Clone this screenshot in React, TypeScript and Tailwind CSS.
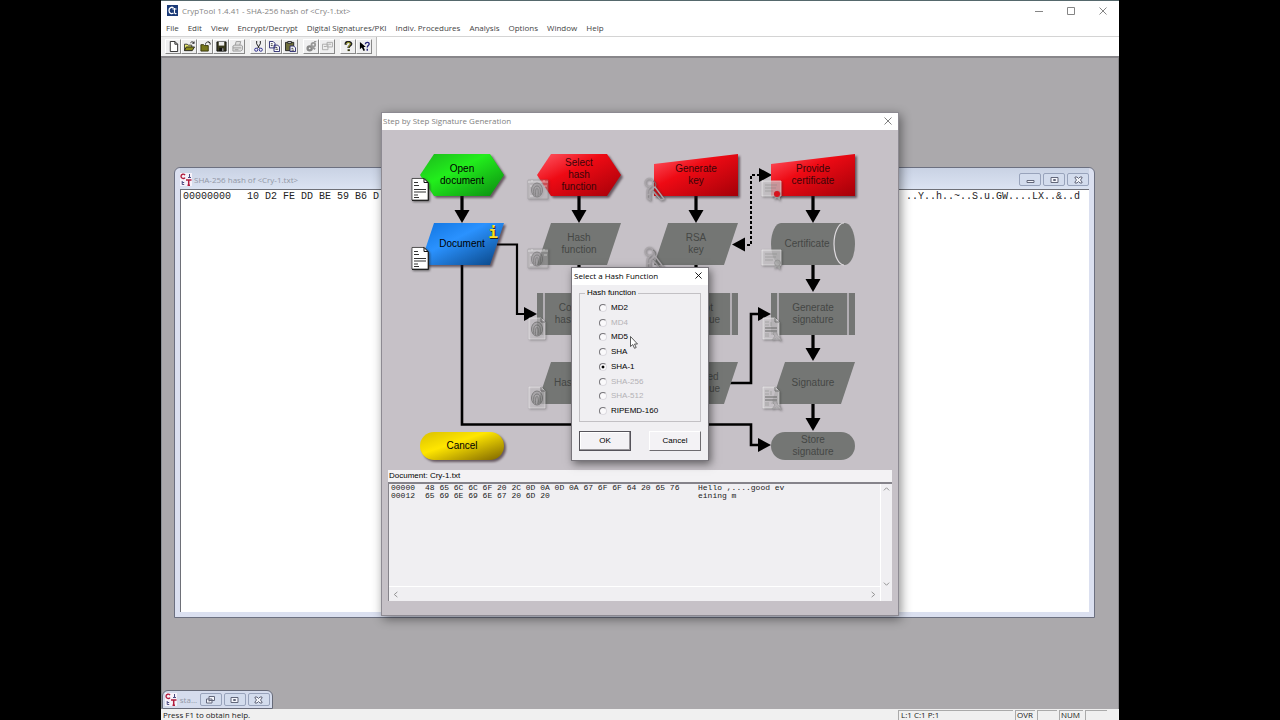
import { useState } from "react";
import type { ReactNode } from "react";

type Shape = "hexagon" | "parallelogram" | "input" | "process" | "cylinder" | "pill";
type Tone = "green" | "red" | "blue" | "yellow" | "gray";
type Badge = "document" | "print" | "printPage" | "key" | "certificate" | "signature";

interface FlowNode {
  id: string;
  label: string;
  col: number;
  row: number;
  shape: Shape;
  tone: Tone;
  badge?: Badge;
  info?: boolean;
}

const COL_X = [38, 155, 272, 389];
const ROW_Y = [24, 93, 163, 232, 302];

const NODES: FlowNode[] = [
  { id: "open", label: "Open\ndocument", col: 0, row: 0, shape: "hexagon", tone: "green", badge: "document" },
  { id: "document", label: "Document", col: 0, row: 1, shape: "parallelogram", tone: "blue", badge: "document", info: true },
  { id: "cancel", label: "Cancel", col: 0, row: 4, shape: "pill", tone: "yellow" },
  { id: "select-hash", label: "Select\nhash\nfunction", col: 1, row: 0, shape: "hexagon", tone: "red", badge: "print" },
  { id: "hash-fn", label: "Hash\nfunction", col: 1, row: 1, shape: "parallelogram", tone: "gray", badge: "print" },
  { id: "compute", label: "Compute\nhash value", col: 1, row: 2, shape: "process", tone: "gray", badge: "printPage" },
  { id: "hash-value", label: "Hash value", col: 1, row: 3, shape: "parallelogram", tone: "gray", badge: "printPage" },
  { id: "gen-key", label: "Generate\nkey", col: 2, row: 0, shape: "input", tone: "red", badge: "key" },
  { id: "rsa-key", label: "RSA\nkey", col: 2, row: 1, shape: "parallelogram", tone: "gray", badge: "key" },
  { id: "encrypt", label: "Encrypt\nhash value", col: 2, row: 2, shape: "process", tone: "gray" },
  { id: "encrypted", label: "Encrypted\nhash value", col: 2, row: 3, shape: "parallelogram", tone: "gray" },
  { id: "provide-cert", label: "Provide\ncertificate", col: 3, row: 0, shape: "input", tone: "red", badge: "certificate" },
  { id: "certificate", label: "Certificate", col: 3, row: 1, shape: "cylinder", tone: "gray", badge: "certificate" },
  { id: "gen-sig", label: "Generate\nsignature", col: 3, row: 2, shape: "process", tone: "gray", badge: "signature" },
  { id: "signature", label: "Signature", col: 3, row: 3, shape: "parallelogram", tone: "gray", badge: "signature" },
  { id: "store", label: "Store\nsignature", col: 3, row: 4, shape: "pill", tone: "gray" },
];

const TONES: Record<Tone, string[]> = {
  green: ["#1cb81c", "#22ee1c", "#0a8a10"],
  red: ["#ff5a66", "#ee0a14", "#a40008"],
  blue: ["#0f72dd", "#2a92ff", "#08427f"],
  yellow: ["#d9c000", "#ffe600", "#7d6400"],
  gray: ["#747674", "#747674", "#747674"],
};

const HASHES = [
  { name: "MD2" },
  { name: "MD4", off: true },
  { name: "MD5" },
  { name: "SHA" },
  { name: "SHA-1" },
  { name: "SHA-256", off: true },
  { name: "SHA-512", off: true },
  { name: "RIPEMD-160" },
];

const MENUS = [
  "File", "Edit", "View", "Encrypt/Decrypt", "Digital Signatures/PKI",
  "Indiv. Procedures", "Analysis", "Options", "Window", "Help",
];

const DUMP = [
  { offset: "00000", hex: "48 65 6C 6C 6F 20 2C 0D 0A 0D 0A 67 6F 6F 64 20 65 76", ascii: "Hello ,....good ev" },
  { offset: "00012", hex: "65 69 6E 69 6E 67 20 6D 20", ascii: "eining m" },
];

const TOOLS: { name: string; icon: ReactNode }[][] = [
  [
    { name: "New", icon: <path d="M2.5 .5h5l3 3v8h-8zM7.5 .5v3h3" fill="#fff" stroke="#222" /> },
    {
      name: "Open",
      icon: (
        <>
          <path d="M.5 10.500v-7h3l1 1h4v2" fill="#e8e86a" stroke="#333" />
          <path d="M.5 10.500l2-4h9l-2.500 4z" fill="#8a8a1c" stroke="#222" />
          <path d="M7 2c1-1.500 3-1.500 4 .5M11 .5v2h-2" fill="none" stroke="#222" />
        </>
      ),
    },
    {
      name: "Close",
      icon: (
        <>
          <path d="M1 11V4h3l1 1h4v6z" fill="#77771c" stroke="#33330a" />
          <path d="M6 4c0-3 3-4 5-2M9 1l2 1v2" fill="none" stroke="#222" />
        </>
      ),
    },
    {
      name: "Save",
      icon: (
        <>
          <path d="M1 1h10v10H1z" fill="#39391c" stroke="#111" />
          <path d="M3 1h6v4H3z" fill="#eee" />
          <path d="M3.500 7.500h5V11h-5z" fill="#111" />
          <path d="M7 8h1v3H7z" fill="#ddd" />
        </>
      ),
    },
    {
      name: "Print",
      icon: (
        <>
          <path d="M3.500 4.500l1-4h5l-1 4M1 5.500l2-1h7l1.500 1v4l-2 1.500H1z" fill="#ddd" stroke="#999" />
          <path d="M1 7.500h9M3 9.500h4" stroke="#999" />
        </>
      ),
    },
  ],
  [
    {
      name: "Cut",
      icon: (
        <>
          <path d="M4 0v3l3 5M8 0v3L5 8" fill="none" stroke="#111" />
          <circle cx="3.500" cy="9.500" r="1.700" fill="none" stroke="#23238a" />
          <circle cx="8.500" cy="9.500" r="1.700" fill="none" stroke="#23238a" />
        </>
      ),
    },
    {
      name: "Copy",
      icon: (
        <>
          <path d="M.5 .5h4l2 2v5h-6zM5.500 4.500h4l2 2v5h-6z" fill="#fff" stroke="#22226a" />
          <path d="M2 3h2M2 5h2M7 7h2M7 9h3" stroke="#333" />
        </>
      ),
    },
    {
      name: "Paste",
      icon: (
        <>
          <path d="M.5 1.500h9v9h-9z" fill="#6d6d3a" stroke="#222" />
          <path d="M3 .5h4v2H3z" fill="#ddd" stroke="#222" />
          <path d="M5.500 5.500h4l2 2v4h-6z" fill="#fff" stroke="#22226a" />
          <path d="M7 8h2M7 10h3" stroke="#333" />
        </>
      ),
    },
  ],
  [
    {
      name: "Show key",
      icon: (
        <>
          <circle cx="4" cy="8" r="2.500" fill="#888" stroke="#888" strokeWidth="2" />
          <circle cx="8" cy="4" r="2" fill="none" stroke="#999" strokeWidth="2" />
          <path d="M9 1l2-1M6 6l4 3" stroke="#999" strokeWidth="2" />
          <circle cx="4" cy="8" r="1" fill="#eee" />
        </>
      ),
    },
    {
      name: "Paste key",
      icon: (
        <path d="M.5 3.500h6v6h-6zM5.500 1.500h6v5h-6zM2 6h3M7 3.500h3" fill="#eee" stroke="#aaa" />
      ),
    },
  ],
  [
    {
      name: "Help",
      icon: (
        <>
          <path d="M3 4V2.500C3.500 .5 8.500 .5 9 3c0 2-3 2-3 4.500" fill="none" stroke="#222" strokeWidth="2.500" />
          <path d="M3.500 3.500c.5-2.500 4.500-2 4.500-.5 0 1.500-2 2-2 4" fill="none" stroke="#c4c42c" />
          <path d="M5 9h2.500v2H5z" fill="#33330a" />
        </>
      ),
    },
    {
      name: "Context help",
      icon: (
        <>
          <path d="M1 1v8l2-2 2 4 1.500-1L5 6.500h2.500z" fill="#000" />
          <path d="M7 3.500C7 .5 11.500 1 11 3.500c-.5 1.500-2 1.500-2 3.500M9 8.500v2" fill="none" stroke="#23237a" strokeWidth="1.500" />
        </>
      ),
    },
  ],
];

function AppIcon() {
  return (
    <svg viewBox="0 0 11 11" className="size-[11px]">
      <path d="M0 0h11v11H0z" fill="#1b3b78" />
      <path d="M6.500 3C5 1.500 2 2.500 2 5.500S5 9.200 6.500 8" fill="none" stroke="#fff" strokeWidth="1.300" />
      <path d="M5.500 4h4M7.500 3v4.500c0 1 1 1.300 2 1" fill="none" stroke="#fff" strokeWidth="1.100" />
    </svg>
  );
}

function ChildIcon() {
  return (
    <svg viewBox="0 0 12 13" className="h-[13px] w-3 shrink-0">
      <path d="M0 0h12v13H0z" fill="#f6f2fa" />
      <path d="M5 2.200C4 .6 1 .8 1 3.300S4 6 5 4.600" fill="none" stroke="#b01c3c" strokeWidth="1.400" />
      <path d="M6 7h5.500M8.700 7v5M7.500 12.300h2.500" fill="none" stroke="#b01c3c" strokeWidth="1.500" />
      <path d="M9.500 1v3.500M8 4.500h3M2.200 8v3.500h2M2.200 9.500h2" fill="none" stroke="#4a4a80" />
    </svg>
  );
}

function CloseGlyph({ className }: { className: string }) {
  return (
    <svg viewBox="0 0 8 8" className={className} fill="none" stroke="currentColor">
      <path d="M.5 .5l7 7M7.500 .5l-7 7" />
    </svg>
  );
}

function FrameButton({ label, kind }: { label: string; kind: "min" | "max" | "restore" | "close" }) {
  return (
    <button
      aria-label={label}
      className="flex h-[13px] w-[22px] items-center justify-center rounded-xs border border-[#98a3bb] bg-[#d3dced]"
    >
      <svg viewBox="0 0 9 8" className="h-2 w-[9px]" fill="#f4f6fb" stroke="#62677a">
        {kind === "min" && <path d="M1 4.500h7v2H1z" />}
        {kind === "max" && <path d="M1 1.500h7v5H1zM3.500 3.500h2v1h-2z" />}
        {kind === "restore" && <path d="M3 .5h5.500v4H3zM.5 3h5.500v4H.5zM2.500 4.800h1.500" />}
        {kind === "close" && <path d="M1 1h2l1.500 1.500L6 1h2v1L6.500 4 8 6v1H6L4.500 5.500 3 7H1V6l1.500-2L1 2z" />}
      </svg>
    </button>
  );
}

function NodeShape({ node }: { node: FlowNode }) {
  const height = node.shape === "pill" ? 28 : 42;
  const fill = `url(#fill-${node.id})`;
  const [a, b, c] = TONES[node.tone];
  return (
    <svg
      viewBox={`0 0 84 ${height}`}
      className={
        node.tone === "gray"
          ? "absolute inset-0 size-full overflow-visible"
          : "absolute inset-0 size-full overflow-visible drop-shadow-[2px_2px_1px_rgba(40,20,30,0.6)]"
      }
    >
      <defs>
        <linearGradient id={`fill-${node.id}`} x1="0" y1="0" x2="1" y2="1">
          <stop offset="0" stopColor={a} />
          <stop offset="0.4" stopColor={b} />
          <stop offset="1" stopColor={c} />
        </linearGradient>
      </defs>
      {node.shape === "hexagon" && <path d="M14 0h56l14 21-14 21H14L0 21z" fill={fill} />}
      {node.shape === "parallelogram" && <path d="M14 0h70L70 42H0z" fill={fill} />}
      {node.shape === "input" && <path d="M0 10L84 0v42H0z" fill={fill} />}
      {node.shape === "pill" && <rect width="84" height="28" rx="14" fill={fill} />}
      {node.shape === "process" && (
        <>
          <path d="M0 0h84v42H0z" fill={fill} />
          <path d="M7 0v42M77 0v42" stroke="#c6c1c7" strokeWidth="1.500" />
        </>
      )}
      {node.shape === "cylinder" && (
        <>
          <path d="M10 0h64a10 21 0 0 1 0 42H10A10 21 0 0 1 10 0z" fill={fill} />
          <path d="M73 0a10 21 0 0 0 0 42" fill="none" stroke="#dedade" strokeWidth="1.200" />
        </>
      )}
    </svg>
  );
}

function BadgeIcon({ badge }: { badge: Badge }) {
  const whorl = (
    <g fill="none" stroke="#777" strokeWidth="1">
      <ellipse cx="10" cy="12" rx="5.500" ry="7" fill="#999" fillOpacity="0.5" />
      <path d="M7 17c-1-5 0-9 3-9s4 3 3 9M8.700 18c-.5-5 0-7.500 1.300-7.500s1.500 3 1 7.500" />
    </g>
  );
  return (
    <svg
      viewBox="0 0 22 24"
      className="absolute top-6 -left-2.5 h-6 w-[22px] overflow-visible drop-shadow-[1px_1px_1px_rgba(40,40,40,0.6)]"
    >
      {badge === "document" && (
        <>
          <path d="M2 .5h12l4 4V22H2z" fill="#fff" stroke="#222" strokeWidth="0.700" />
          <path d="M14 .5v4h4z" fill="#fff" stroke="#111" />
          <path d="M4 4.500h4M4 7.500h5M4 17h4M4 19.500h5" stroke="#333" strokeWidth="1.200" />
          <path d="M4 11.500h12M4 14h12" stroke="#333" strokeWidth="1.200" />
          <path d="M2 22.500h16.500V5" fill="none" stroke="#222" />
        </>
      )}
      {badge === "print" && (
        <g opacity="0.6">
          <path d="M1 2h20v19H1z" fill="#e8e4e8" fillOpacity="0.5" stroke="#888" strokeWidth="0.600" />
          <path d="M1 4h20M5 2v2M17 2v2M3 8h3M3 18h3M17 8h3" stroke="#fff" />
          {whorl}
        </g>
      )}
      {badge === "printPage" && (
        <g opacity="0.75">
          <path d="M2 1h12l4 4v17H2z" fill="#e8e4e8" fillOpacity="0.65" stroke="#f4f4f4" strokeWidth="0.700" />
          <path d="M14 1v4h4" fill="none" stroke="#666" />
          {whorl}
        </g>
      )}
      {badge === "key" && (
        <g fill="none" stroke="#aaa6aa" strokeWidth="1.400">
          <circle cx="5" cy="4.500" r="4" />
          <path d="M9 3c3 1 4 5 1 7" stroke="#777" strokeWidth="1" />
          <path d="M7 8l-4 4v8l3 2v-9l5-4 9 12-3 1-8-9M3 17l3-1" />
          <path d="M9 12l8 9" stroke="#777" strokeWidth="0.800" />
        </g>
      )}
      {badge === "certificate" && (
        <g opacity="0.8">
          <path d="M1 3h19v15H1z" fill="#e2dfe2" fillOpacity="0.8" stroke="#f4f4f4" strokeWidth="0.800" />
          <path d="M4 7h12M4 10h11M4 13h8" stroke="#aaa" />
          <path d="M14 17l-1 5 3-2 3 3v-6" fill="#aaa" />
          <circle cx="16.500" cy="16" r="3" fill="#bbb" stroke="#888" strokeWidth="0.500" />
        </g>
      )}
      {badge === "signature" && (
        <g opacity="0.85">
          <path d="M2 1h12l4 4v17H2z" fill="#e2dfe2" fillOpacity="0.8" stroke="#f4f4f4" strokeWidth="0.700" />
          <path d="M14 1v4h4" fill="none" stroke="#777" />
          <path d="M4 5h4M4 8h4M4 17h4M4 19h4M10 5v4" stroke="#aaa" />
          <path d="M4 11h12M4 14h12" stroke="#888" strokeWidth="1.400" />
          <path d="M12 17a2 2 0 1 1 4 0c0 2 4 3 4 7l-4-3-5 2 3-4z" fill="#c0bcc0" stroke="#999" strokeWidth="0.600" />
        </g>
      )}
    </svg>
  );
}

function FlowButton({ node }: { node: FlowNode }) {
  const disabled = node.tone === "gray";
  return (
    <button
      disabled={disabled}
      className={`absolute flex w-[84px] items-center justify-center ${node.shape === "pill" ? "h-7" : "h-[42px]"} ${node.shape === "cylinder" ? "pr-3" : ""}`}
      style={{ left: COL_X[node.col], top: ROW_Y[node.row] }}
    >
      <NodeShape node={node} />
      {node.id === "provide-cert" ? <SealedBadge /> : node.badge && <BadgeIcon badge={node.badge} />}
      <span
        className={`relative text-center text-[10px]/3 whitespace-pre ${disabled ? "text-[#454745]" : node.tone === "red" ? "text-[#3a0508]" : "text-black"}`}
      >
        {node.label}
      </span>
      {node.info && (
        <span className="absolute top-0.5 right-1.5 font-['DejaVu_Sans_Mono',monospace] text-base/4 font-bold text-yellow-300 [text-shadow:1px_1px_0_#222]">
          i
        </span>
      )}
    </button>
  );
}

function SealedBadge() {
  return (
    <>
      <BadgeIcon badge="certificate" />
      <span className="absolute top-[37px] left-[3px] size-1.5 rounded-full bg-[#d8121c]" />
    </>
  );
}

function Connectors() {
  return (
    <svg viewBox="1 0 516 340" className="absolute top-0 left-0 h-[340px] w-[516px]">
      <g fill="none" stroke="#000" strokeWidth="2.600">
        <path d="M81 66v18M198 66v18M315 66v18M432 66v18" strokeWidth="3.200" />
        <path d="M198 135v18M315 135v18M432 135v18M198 205v18M315 205v18M432 205v18M432 274v18" strokeWidth="3.200" />
        <path d="M81 135v159.500h289v20.500h10" />
        <path d="M116 114.500h20V184h10" strokeWidth="2.200" />
        <path d="M349 253h21v-69H380" />
        <path d="M379 45h-9v70h-9" strokeWidth="2" strokeDasharray="3 2" />
      </g>
      {[
        [81, 93], [198, 93], [315, 93], [432, 93],
        [198, 162], [315, 162], [432, 162],
        [198, 231], [315, 231], [432, 231], [432, 301],
      ].map(([x, y]) => (
        <path key={`${x}-${y}`} d={`M${x - 7.5} ${y - 13}h15l-7.500 13z`} />
      ))}
      {[[156, 184], [390, 184], [390, 315], [391, 45]].map(([x, y]) => (
        <path key={`${x}-${y}`} d={`M${x - 13} ${y - 7}v14l13-7z`} />
      ))}
      <path d="M351 114.500l13-7v14z" />
    </svg>
  );
}

function HashDialog() {
  const [hash, setHash] = useState("SHA-1");
  return (
    <div
      role="dialog"
      aria-label="Select a Hash Function"
      className="relative flex w-[138px] flex-col border border-[#77747a] bg-[#f0eff2] pb-[9px] text-[8px]/3 text-black shadow-[2px_3px_8px_rgba(0,0,0,0.5)]"
    >
      <div className="flex h-[17px] items-center justify-between bg-white pr-1.5 pb-0.5 pl-0.5">
        <h2 className="font-['Open_Sans',sans-serif] whitespace-nowrap">Select a Hash Function</h2>
        <button aria-label="Close">
          <CloseGlyph className="size-[7px]" />
        </button>
      </div>
      <fieldset className="mx-[7px] mt-0.5 border border-[#c2c0c4] px-[19px] pt-0.5 pb-[3px]">
        <legend className="-ml-3.5 px-0.5">Hash function</legend>
        <div className="flex h-[117px] flex-col justify-between">
          {HASHES.map((h) => (
            <label
              key={h.name}
              className={`flex h-3.5 items-center gap-1 whitespace-nowrap ${h.off ? "text-[#b4b2b6]" : ""}`}
            >
              <input
                type="radio"
                name="hash"
                disabled={h.off}
                checked={hash === h.name}
                onChange={() => setHash(h.name)}
                className="size-2 appearance-none rounded-full border border-t-[#77757a] border-r-[#dddbe0] border-b-[#dddbe0] border-l-[#77757a] bg-[#faf9fb] checked:bg-[radial-gradient(#000_30%,#faf9fb_40%)]"
              />
              {h.name}
            </label>
          ))}
        </div>
      </fieldset>
      <div className="mx-[7px] mt-[9px] flex justify-between">
        <button className="h-5 w-[52px] border border-[#55535a] bg-[#f3f2f5] shadow-[inset_-1px_-1px_0_#98969a,inset_1px_1px_0_#fff]">
          OK
        </button>
        <button className="h-5 w-[52px] border border-t-white border-r-[#6e6c70] border-b-[#6e6c70] border-l-white bg-[#f3f2f5]">
          Cancel
        </button>
      </div>
      <svg viewBox="0 0 9 13" className="absolute top-[68px] left-[58px] h-[13px] w-[9px]">
        <path d="M.5 .5v10l2.300-2 1.700 3.800 1.700-.8-1.700-3.500h3z" fill="#fff" stroke="#333" strokeWidth="0.800" />
      </svg>
    </div>
  );
}

function DocumentPane() {
  return (
    <section className="mx-1.5 mb-3.5 flex min-h-0 flex-1 flex-col bg-[#f3f2f4]">
      <h3 className="h-3 pl-px text-[8px]/3 text-black">Document: Cry-1.txt</h3>
      <div className="flex min-h-0 flex-1 border-t-2 border-l border-[#85838a] bg-[#f0eff2]">
        <div className="flex flex-1 flex-col justify-between">
          <table className="ml-0.5 w-[404px] table-fixed text-left font-['Liberation_Mono',monospace] text-[8px]/2 whitespace-pre text-[#222]">
            <tbody>
              {DUMP.map((row) => (
                <tr key={row.offset}>
                  <td className="w-[34px]">{row.offset}</td>
                  <td className="w-[273px]">{row.hex}</td>
                  <td>{row.ascii}</td>
                </tr>
              ))}
            </tbody>
          </table>
          <div className="flex h-[15px] items-center justify-between border-t border-white px-1 text-[#888]">
            <Chevron d="M5 1L1.500 4 5 7" />
            <Chevron d="M3 1l3.500 3L3 7" />
          </div>
        </div>
        <div className="flex w-3 flex-col items-center justify-between border-l border-white pt-0.5 pb-[14px] text-[#888]">
          <Chevron d="M1 5l3-3 3 3" />
          <Chevron d="M1 3l3 3 3-3" />
        </div>
      </div>
    </section>
  );
}

function Chevron({ d }: { d: string }) {
  return (
    <svg viewBox="0 0 8 8" className="size-[7px]" fill="none" stroke="currentColor">
      <path d={d} />
    </svg>
  );
}

function SignatureDialog() {
  return (
    <div
      role="dialog"
      aria-label="Step by Step Signature Generation"
      className="absolute top-[54px] left-1/2 flex h-[504px] w-[518px] -translate-x-1/2 flex-col border border-[#8d8a92] bg-[#c6c1c7] shadow-[2px_3px_10px_rgba(0,0,0,0.45)]"
    >
      <div className="flex h-[17px] shrink-0 items-center justify-between bg-white pr-1.5 pb-px pl-px text-[#808080]">
        <h2 className="font-['Open_Sans',sans-serif] text-[8px]/3">Step by Step Signature Generation</h2>
        <button aria-label="Close">
          <CloseGlyph className="size-2" />
        </button>
      </div>
      <div className="relative h-[340px] shrink-0">
        <Connectors />
        {NODES.map((node) => (
          <FlowButton key={node.id} node={node} />
        ))}
      </div>
      <DocumentPane />
      <div className="absolute inset-0 flex items-center justify-center">
        <HashDialog />
      </div>
    </div>
  );
}

function HashWindow() {
  return (
    <section className="absolute top-[109px] right-6 left-[13px] flex h-[451px] flex-col rounded-t-md border border-[#6c7080] bg-[#dbe0f0] px-[5px] pb-[5px]">
      <div className="flex h-[21px] items-center justify-between bg-linear-to-b from-[#c9d2e4] to-[#dbe3f2]">
        <div className="flex items-center gap-0.5 pt-0.5">
          <ChildIcon />
          <h2 className="font-['Open_Sans',sans-serif] text-[8px]/3 text-[#9298a6]">
            SHA-256 hash of &lt;Cry-1.txt&gt;
          </h2>
        </div>
        <div className="flex gap-0.5 pt-0.5">
          <FrameButton label="Minimize" kind="min" />
          <FrameButton label="Maximize" kind="max" />
          <FrameButton label="Close" kind="close" />
        </div>
      </div>
      <div className="flex flex-1 justify-between border-t border-l border-[#6e7078] bg-white pt-0.5 pr-[9px] pl-0.5 font-['Liberation_Mono',monospace] text-[10px]/[10px] whitespace-pre text-[#222]">
        <div className="flex gap-4">
          <span>00000000</span>
          <span>10 D2 FE DD BE 59 B6 D</span>
        </div>
        <span>..Y..h..~..S.u.GW....LX..&amp;..d</span>
      </div>
    </section>
  );
}

function MinimizedWindow() {
  return (
    <section className="absolute bottom-0 left-px flex h-[19px] w-[111px] items-center justify-between rounded-t-md border border-[#666a78] bg-[#d5dced] pr-0.5 pl-0.5">
      <ChildIcon />
      <span className="font-['Open_Sans',sans-serif] text-[8px]/3 text-[#9298a6]">sta...</span>
      <div className="flex gap-0.5">
        <FrameButton label="Restore" kind="restore" />
        <FrameButton label="Maximize" kind="max" />
        <FrameButton label="Close" kind="close" />
      </div>
    </section>
  );
}

function ToolBar() {
  return (
    <div className="flex h-[22px] shrink-0 border-t border-b-2 border-t-[#d4d4d4] border-b-[#88868a] bg-white">
      <div role="toolbar" className="flex items-center gap-[5px] border-r border-[#bbb] bg-[#f0f0f0] pr-1 pl-1">
        {TOOLS.map((group) => (
          <div key={group[0].name} className="flex">
            {group.map((tool) => (
              <button
                key={tool.name}
                aria-label={tool.name}
                className="flex h-[15px] w-4 items-center justify-center border border-t-white border-r-[#888] border-b-[#888] border-l-white bg-[#efeff0]"
              >
                <svg viewBox="0 0 12 12" className="size-[11px]" fill="none">
                  {tool.icon}
                </svg>
              </button>
            ))}
          </div>
        ))}
      </div>
    </div>
  );
}

function StatusBar() {
  return (
    <footer className="flex shrink-0 gap-0.5 bg-[#f0f0f0] pt-px pr-3 pl-0.5 font-['Open_Sans',sans-serif] text-[8px]/[10px] text-[#222]">
      <span className="flex-1">Press F1 to obtain help.</span>
      <span className="w-[115px] border-l border-[#aaa] pl-0.5 shadow-[inset_0_1px_0_#aaa]">L:1 C:1 P:1</span>
      <span className="w-5 border-l border-[#aaa] pl-px shadow-[inset_0_1px_0_#aaa]">OVR</span>
      <span className="w-5 border-l border-[#aaa] shadow-[inset_0_1px_0_#aaa]" />
      <span className="w-6 border-l border-[#aaa] pl-px shadow-[inset_0_1px_0_#aaa]">NUM</span>
      <span className="w-[22px] border-l border-[#aaa] shadow-[inset_0_1px_0_#aaa]" />
    </footer>
  );
}

export default function App() {
  return (
    <div className="h-screen overflow-hidden bg-black px-[161px] font-['Liberation_Sans',Arial,sans-serif]">
      <div className="flex h-full flex-col border-t border-[#55686c] bg-white">
        <header className="flex h-[19px] shrink-0 items-center justify-between pr-3 pl-1.5 font-['Open_Sans',sans-serif] text-[#858585]">
          <div className="flex items-center gap-1">
            <AppIcon />
            <h1 className="text-[8px]/3">CrypTool 1.4.41 - SHA-256 hash of &lt;Cry-1.txt&gt;</h1>
          </div>
          <div className="flex items-center gap-6">
            <button aria-label="Minimize">
              <svg viewBox="0 0 8 8" className="size-2" stroke="currentColor">
                <path d="M0 4.500h8" />
              </svg>
            </button>
            <button aria-label="Maximize">
              <svg viewBox="0 0 8 8" className="size-2" stroke="currentColor" fill="none">
                <path d="M.5 .5h7v7h-7z" />
              </svg>
            </button>
            <button aria-label="Close">
              <CloseGlyph className="size-2" />
            </button>
          </div>
        </header>
        <nav className="flex h-4 shrink-0 items-center gap-[9px] pl-[5px] font-['Open_Sans',sans-serif] text-[8px]/3 whitespace-nowrap text-[#444]">
          {MENUS.map((menu) => (
            <button key={menu}>{menu}</button>
          ))}
        </nav>
        <ToolBar />
        <main className="relative flex-1 bg-[#aba9ac] shadow-[inset_1px_0_0_#8b9094,inset_-1px_0_0_#8b898c]">
          <HashWindow />
          <MinimizedWindow />
          <SignatureDialog />
        </main>
        <StatusBar />
      </div>
    </div>
  );
}
